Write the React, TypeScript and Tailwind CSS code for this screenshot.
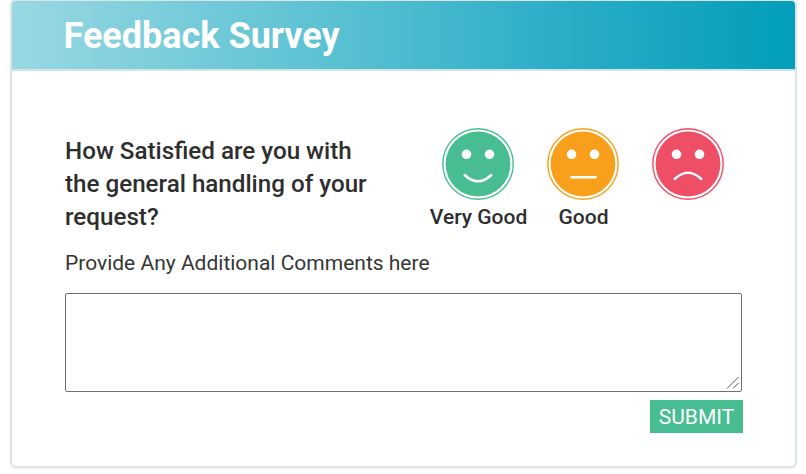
import React from "react";

type Mood = "happy" | "neutral" | "sad";

const mouths: Record<Mood, string> = {
  happy: "M22.7 47 Q36 59.5 49.3 47",
  neutral: "M24.5 49.2 H48.5",
  sad: "M22.7 51 Q36 38.5 49.3 51",
};

function Face({ mood, color }: { mood: Mood; color: string }) {
  return (
    <svg width="72" height="72" viewBox="0 0 72 72" fill="none" className="block">
      <circle cx="36" cy="36" r="35.2" stroke={color} strokeWidth="1.4" fill="white" />
      <circle cx="36" cy="36" r="32.4" fill={color} />
      <circle cx="24.5" cy="26.3" r="4.8" fill="white" />
      <circle cx="47.5" cy="26.3" r="4.8" fill="white" />
      <path d={mouths[mood]} stroke="white" strokeWidth="2.5" strokeLinecap="round" />
    </svg>
  );
}

const options: { mood: Mood; color: string; label: string }[] = [
  { mood: "happy", color: "#48bd91", label: "Very Good" },
  { mood: "neutral", color: "#f8a01c", label: "Good" },
  { mood: "sad", color: "#ef4f66", label: "" },
];

export default function App() {
  return (
    <div className="h-[474px] w-[806px] overflow-hidden bg-white pl-[10px] font-['Roboto',sans-serif] text-[#2e2e2e]">
      <div className="-mt-px h-[469px] w-[787px] overflow-hidden rounded-[6px] border-2 border-[#dde4e5] bg-white shadow-[0_1px_3px_rgba(0,0,0,0.06)]">
        <header className="h-[70px] border-b-2 border-[#cfe3e8] bg-[linear-gradient(to_right,#99d8e3,#52bed0_46%,#2badc7_70%,#029ebb)] pl-[52px]">
          <h1 className="pt-px text-[36px] leading-[69px] font-bold whitespace-nowrap text-white -indent-[0.5px]">Feedback Survey</h1>
        </header>
        <main className="pr-[52px] pl-[53px]">
          <div className="flex pt-[57px]">
            <h2 className="w-[360px] pt-[7px] text-[24.2px] leading-[33px] font-medium">
              How Satisfied are you with
              <br />
              the general handling of your
              <br />
              request?
            </h2>
            <div className="flex">
              {options.map((o) => (
                <div key={o.mood} className="flex w-[105px] flex-col items-center">
                  <Face mood={o.mood} color={o.color} />
                  <span className="mt-[3px] pl-[2px] text-[21px] leading-7 font-medium whitespace-nowrap">{o.label}</span>
                </div>
              ))}
            </div>
          </div>
          <label htmlFor="comments" className="mt-[13px] block text-[21px] leading-8 whitespace-nowrap text-[#363636]">
            Provide Any Additional Comments here
          </label>
          <div className="relative mt-[14px] w-[677px]">
            <textarea
              id="comments"
              className="block h-[99px] w-full resize-none rounded-[2px] border border-[#707070] bg-white"
            />
            <svg
              width="14"
              height="14"
              viewBox="0 0 14 14"
              className="pointer-events-none absolute right-[2px] bottom-[2px]"
              stroke="#555"
              strokeWidth="1"
            >
              <path d="M1 12.5 L12.5 1 M7 12.5 L12.5 7" />
            </svg>
          </div>
          <div className="mt-2 flex w-[678px] justify-end">
            <button className="h-[33px] w-[93px] bg-[#48bd91] pt-px text-[21px] leading-[32px] text-white">SUBMIT</button>
          </div>
        </main>
      </div>
    </div>
  );
}
